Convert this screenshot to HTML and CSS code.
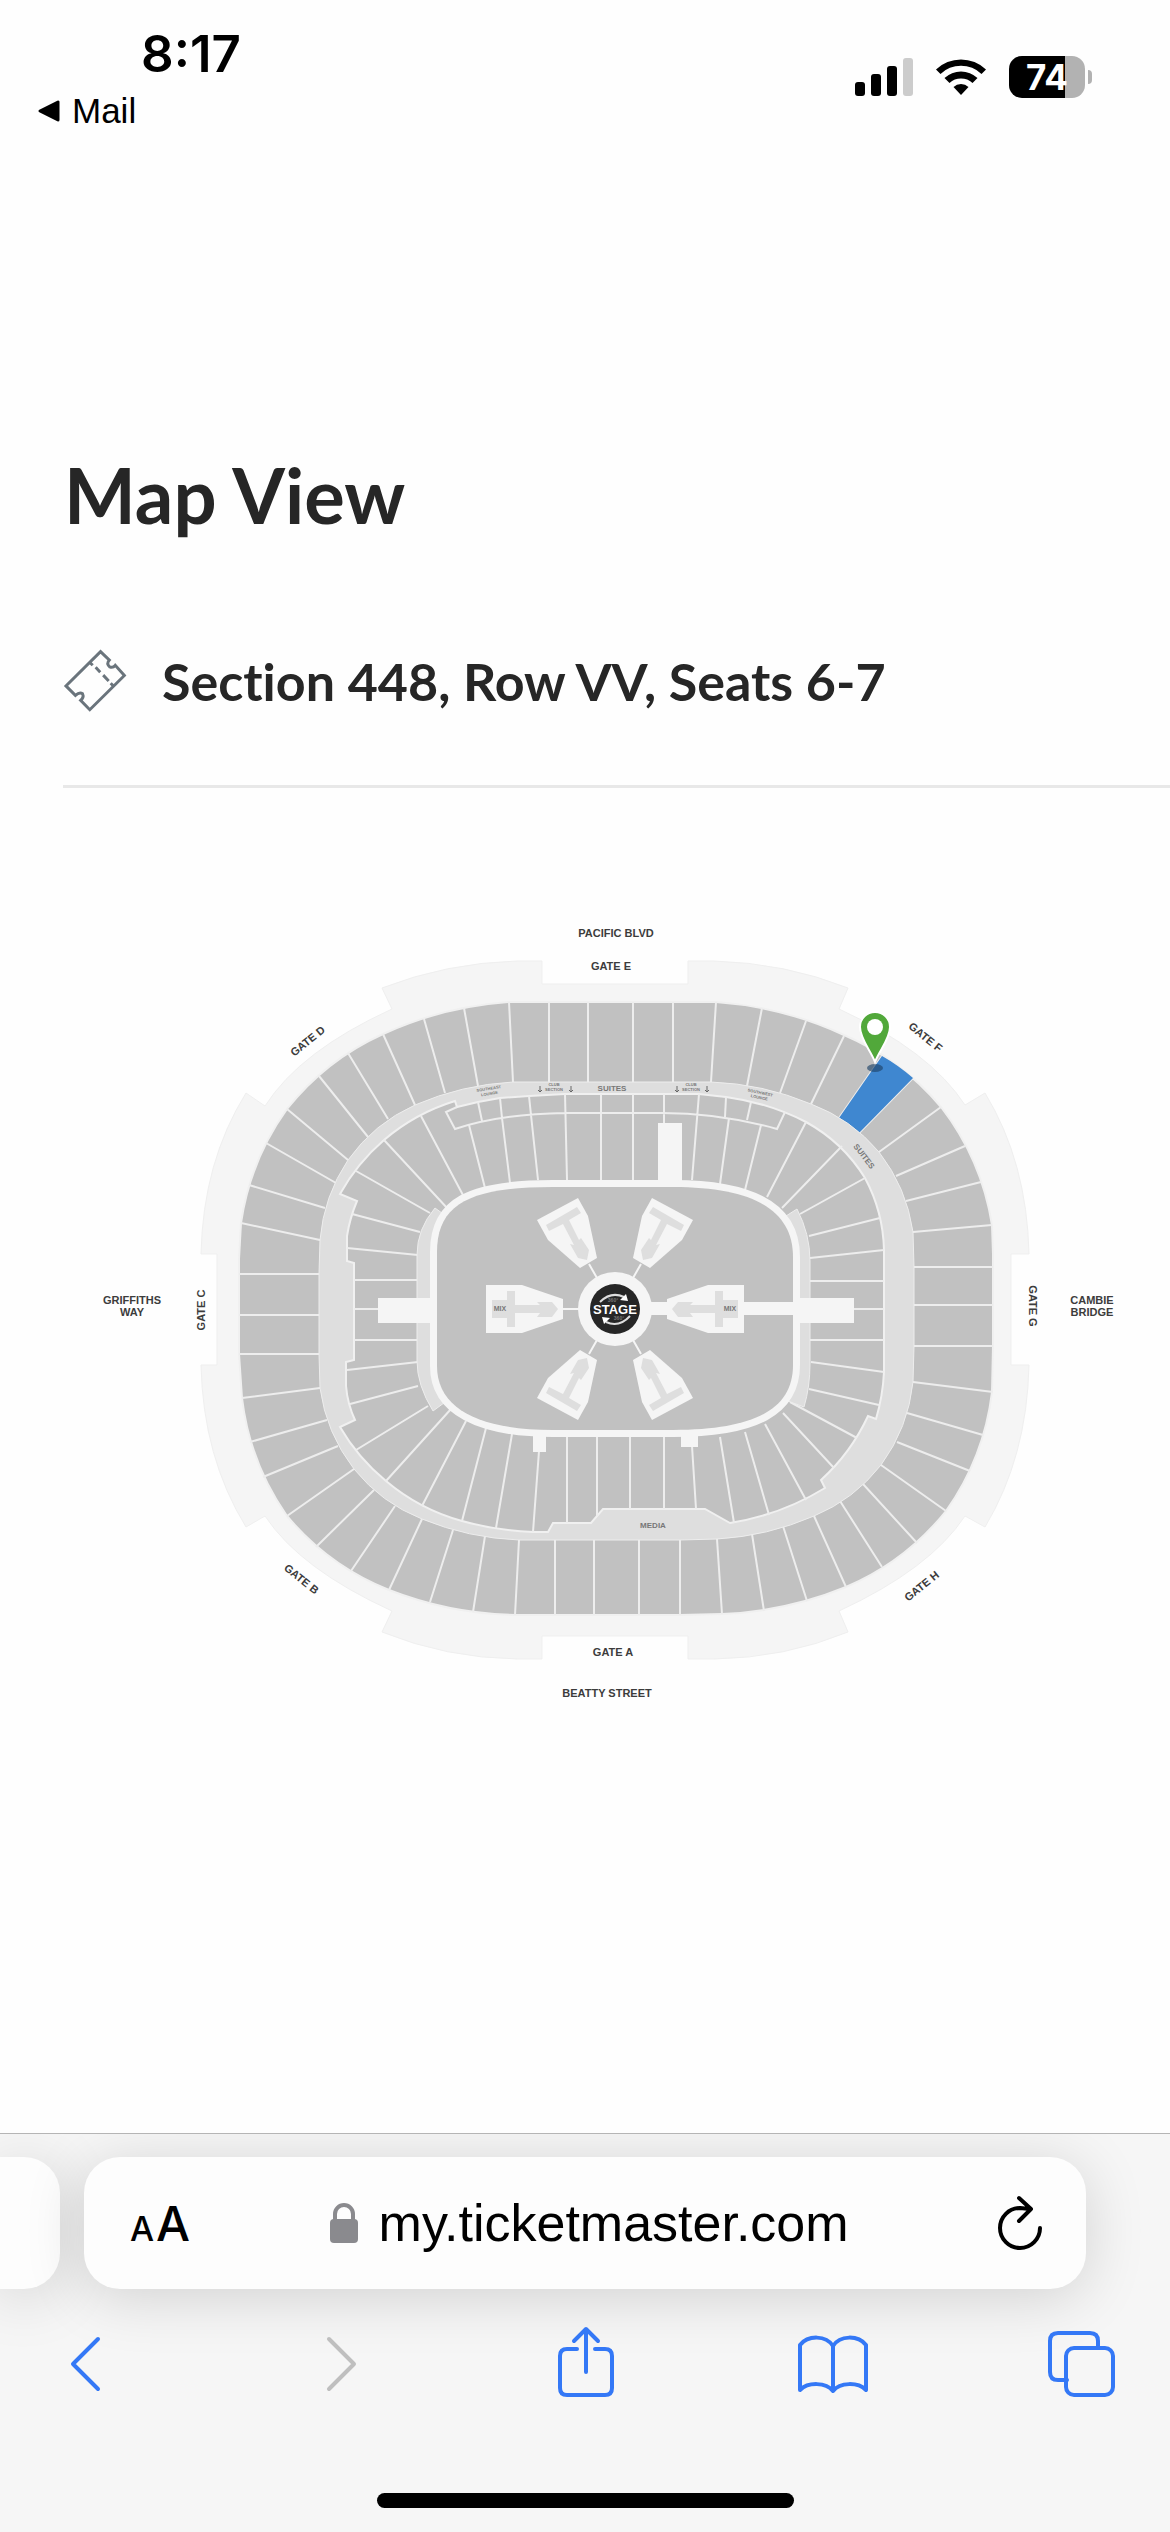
FILE: index.html
```
<!DOCTYPE html>
<html lang="en">
<head>
    <meta charset="UTF-8">
    <meta name="viewport" content="width=device-width, initial-scale=1.0">
    <title>Map View</title>
    <link rel="stylesheet" href="styles.css">
</head>
<body>
    <header class="status-bar">
        <div class="status-left">
            <time class="clock">8:17</time>
            <a class="back-link" href="#">
                <svg width="22" height="22" viewBox="0 0 22 22" aria-hidden="true"><path d="M20 2v18L2 11z" fill="#000" stroke="#000" stroke-width="3" stroke-linejoin="round"/></svg>
                Mail
            </a>
        </div>
        <div class="status-right">
            <svg width="58" height="38" viewBox="0 0 58 38" aria-label="Signal">
                <rect x="0" y="24" width="10" height="14" rx="3"/>
                <rect x="16" y="16" width="10" height="22" rx="3"/>
                <rect x="32" y="8" width="10" height="30" rx="3"/>
                <rect x="48" y="0" width="10" height="38" rx="3" fill="#ccc"/>
            </svg>
            <svg width="52" height="38" viewBox="0 0 52 38" aria-label="Wi-Fi">
                <path d="M1 11.500A36 36 0 0 1 51 11.500L46.500 16A29.500 29.500 0 0 0 5.500 16z"/>
                <path d="M9.500 20A24 24 0 0 1 42.500 20L37.500 25A17 17 0 0 0 14.500 25z"/>
                <path d="M18.500 29A11 11 0 0 1 33.500 29L26 37z"/>
            </svg>
            <div class="battery"><span class="battery-level">74</span></div>
        </div>
    </header>

    <main>
        <h1>Map View</h1>
        <div class="seat-info">
            <svg class="ticket-icon" viewBox="66 58 196 196" aria-hidden="true">
                <path d="M181 66L208 92Q198 103 209 113Q219 117 226 108L254 139L148 244L120 215Q131 206 126 195Q117 188 104 200L75 171z"/>
                <path d="M149 100l8 8M166 114l14 15M189 138l17 18M212 163l8 8"/>
            </svg>
            <h2>Section 448, Row VV, Seats 6-7</h2>
        </div>

        <svg class="venue-map" viewBox="0 900 1170 820" role="img" aria-label="Seating map">
            <!-- concourse -->
            <path class="concourse" d="M542 962H517Q446 964 382 989L392 1010Q300 1052 265 1107L246 1094Q203 1163 201 1255H217V1366H201Q203 1458 246 1528L265 1517Q300 1570 392 1612L382 1633Q446 1659 517 1660H542V1637H688V1660H714Q785 1659 848 1633L839 1612Q930 1570 965 1517L985 1528Q1027 1458 1029 1366H1011V1255H1029Q1027 1163 985 1094L965 1106Q930 1052 839 1010L848 989Q785 964 714 962H688V985H542z"/>

            <!-- upper bowl -->
            <path class="seats" d="M508 1003A365 365 0 0 0 383 1035A258 258 0 0 0 287 1110A260 260 0 0 0 241 1224L239 1260V1355L242 1399A260 260 0 0 0 287 1517A258 258 0 0 0 389 1591A365 365 0 0 0 515 1616H680L722 1615A365 365 0 0 0 846 1588A258 258 0 0 0 946 1512A260 260 0 0 0 992 1393L993 1347V1255L992 1226A260 260 0 0 0 941 1108A258 258 0 0 0 844 1036A365 365 0 0 0 716 1003z"/>
            <path class="aisle" d="M509 1003L513 1083M464 1009L478 1087M424 1020L445 1094M383 1035L415 1106M348 1054L388 1120M319 1077L368 1138M287 1110L348 1161M266 1144L336 1184M249 1186L325 1209M241 1224L320 1241M239 1275H319M239 1316H319M239 1355H319M242 1399L320 1389M250 1443L327 1421M263 1478L338 1447M287 1517L354 1470M316 1548L374 1491M351 1572L395 1507M389 1591L422 1520M430 1603L453 1531M473 1613L485 1537M515 1616L519 1541M555 1616V1541M594 1616V1541M639 1616V1541M680 1616V1541M722 1615L717 1540M764 1612L752 1535M807 1602L783 1527M846 1588L814 1517M882 1568L840 1502M917 1544L863 1485M946 1512L881 1466M970 1472L897 1443M983 1436L907 1414M993 1393L913 1383M993 1347H914M993 1306H914M993 1268H914M992 1226L913 1233M981 1183L906 1202M965 1147L896 1177M941 1108L879 1153M913 1079L859 1134M882 1057L839 1119M844 1037L811 1105M806 1022L780 1094M762 1009L747 1087M716 1003L711 1083M673 1003V1083M633 1003V1083M588 1003V1083M549 1003V1083"/>
            <path class="picked" d="M882 1057Q898 1066 913 1079L859 1134Q850 1126 839 1119z"/>

            <!-- suites ring -->
            <path class="ring" d="M549 1083H513A285 285 0 0 0 415 1106A165 165 0 0 0 348 1161A170 170 0 0 0 320 1241L319 1275V1355L320 1389A170 170 0 0 0 354 1470A165 165 0 0 0 422 1520A285 285 0 0 0 519 1541H680L717 1540A285 285 0 0 0 814 1517A165 165 0 0 0 881 1466A170 170 0 0 0 913 1383L914 1347V1268L913 1233A170 170 0 0 0 879 1153A165 165 0 0 0 811 1105A285 285 0 0 0 711 1083z"/>

            <!-- lower bowl -->
            <path class="seats" d="M600 1095H565L529 1097L500 1099L478 1103L457 1108L455 1102A200 200 0 0 0 384 1141A200 200 0 0 0 340 1195L357 1202A150 150 0 0 0 347 1237V1262L354 1264V1361L346 1363V1387A100 100 0 0 0 355 1421L340 1428A200 200 0 0 0 386 1482A200 200 0 0 0 462 1522A300 300 0 0 0 533 1533H548L553 1524H591L603 1510H705L730 1524A260 260 0 0 0 825 1489L821 1481A200 200 0 0 0 868 1417L876 1420A200 200 0 0 0 884 1373V1251A160 160 0 0 0 865 1179A160 160 0 0 0 806 1123A250 250 0 0 0 726 1098L699 1095z"/>
            <path class="aisle" d="M457 1108L446 1113L455 1130Q500 1115 565 1114H662Q720 1114 777 1130L785 1113M478 1103L482 1122M500 1099L502 1119L510 1184M529 1097L531 1116L538 1181M565 1095L567 1181M601 1095V1181M633 1095V1181M664 1095V1124M699 1095L692 1181M726 1098L725 1118M729 1119L720 1185M751 1103L747 1121M761 1126L745 1191M806 1123L767 1198M842 1147L782 1209M865 1179L800 1215M880 1219L809 1237M884 1251L810 1259M884 1282H810M884 1310H854M884 1341H810M884 1373L811 1363M879 1406L809 1390M857 1439L790 1403M834 1469L783 1414M806 1501L765 1425M769 1516L745 1433M734 1524L720 1438M696 1510L692 1447M664 1510V1437M630 1510V1437M597 1517V1437M567 1524V1437M533 1533L539 1452M496 1529L512 1435M462 1522L486 1429M422 1507L466 1422M386 1482L451 1410M356 1451L428 1407M350 1405L418 1387M347 1371L418 1363M354 1341H418M354 1310H378M354 1281H418M347 1249L418 1256M352 1215L420 1233M356 1172L430 1214M384 1141L448 1210M421 1117L464 1198M469 1126L485 1189"/>

            <!-- side strips and entries -->
            <path class="ring" d="M435 1209Q417 1230 417 1256V1362Q417 1386 433 1412L448 1401L436 1370V1250L446 1217z"/>
            <path class="ring" d="M797 1210Q810 1235 810 1262V1364Q810 1388 804 1408L788 1402L796 1370V1250L786 1217z"/>
            <path class="wall" d="M378 1299h56v25h-56zM796 1299h58v25h-58zM658 1124h24v62h-24zM533 1434h13v19h-13zM681 1434h17v14h-17z"/>

            <!-- floor -->
            <path class="floor" d="M437 1253C437 1205 470 1188 553 1188H673C755 1188 793 1212 793 1258V1366C793 1410 755 1431 673 1431H553C480 1431 437 1410 437 1367z"/>
            <path class="wall" d="M640 1303h156v13h-156z"/>
            <path class="walkway" d="M562 1310h20M589 1265l8 14M641 1265l-8 14M589 1355l8-14M641 1355l-8-14"/>
            <circle class="wall" cx="615" cy="1310" r="37"/>

            <defs>
                <g id="pod">
                    <path class="wall" d="M578 1199L588 1217L597 1259L580 1269L548 1241L537 1221z"/>
                    <path class="rig" d="M546 1226L577 1208L581 1214L569 1221L579 1241L581 1239L589 1251L587 1261L578 1259L570 1245L574 1246L563 1225L549 1232z"/>
                </g>
                <g id="mix-pod">
                    <path class="wall" d="M486 1286h36l41 14v20l-41 14h-36z"/>
                    <path class="rig" d="M492 1301h15v-9h8v14h25l-3-3h15l6 7l-6 8h-15l3-4h-25v14h-8v-9h-15z"/>
                </g>
            </defs>
            <use href="#pod"/>
            <use href="#pod" transform="matrix(-1 0 0 1 1230 0)"/>
            <use href="#pod" transform="matrix(1 0 0 -1 0 2620)"/>
            <use href="#pod" transform="matrix(-1 0 0 -1 1230 2620)"/>
            <use href="#mix-pod"/>
            <use href="#mix-pod" transform="matrix(-1 0 0 1 1230 0)"/>
            <text class="note" x="500" y="1312">MIX</text>
            <text class="note" x="730" y="1312">MIX</text>

            <circle cx="615" cy="1310" r="25" fill="#262626"/>
            <path class="spin" d="M600 1303Q611 1292 624 1298"/>
            <path class="spin" d="M630 1317Q619 1329 606 1323"/>
            <path d="M628 1302l-8-1l6-6zM602 1318l8 1l-6 6z" fill="#fff"/>
            <text class="degrees" x="613" y="1303">360°</text>
            <text class="degrees" x="619" y="1321">360°</text>
            <text class="stage" x="615" y="1315">STAGE</text>

            <!-- labels -->
            <text class="gate" x="616" y="938">PACIFIC BLVD</text>
            <text class="gate" x="611" y="971">GATE E</text>
            <text class="gate" x="613" y="1657">GATE A</text>
            <text class="gate" x="607" y="1698">BEATTY STREET</text>
            <text class="gate" x="132" y="1305">GRIFFITHS</text>
            <text class="gate" x="132" y="1317">WAY</text>
            <text class="gate" x="1092" y="1305">CAMBIE</text>
            <text class="gate" x="1092" y="1317">BRIDGE</text>
            <text class="gate" transform="translate(205 1311) rotate(-90)">GATE C</text>
            <text class="gate" transform="translate(1029 1307) rotate(90)">GATE G</text>
            <text class="gate" transform="translate(310 1045) rotate(-39)">GATE D</text>
            <text class="gate" transform="translate(923 1041) rotate(39)">GATE F</text>
            <text class="gate" transform="translate(299 1583) rotate(39)">GATE B</text>
            <text class="gate" transform="translate(924 1590) rotate(-39)">GATE H</text>
            <text class="suite" x="612" y="1092">SUITES</text>
            <text class="suite" transform="translate(862 1159) rotate(52)">SUITES</text>
            <text class="suite" x="653" y="1529">MEDIA</text>
            <text class="tiny" x="554" y="1087">CLUB</text>
            <text class="tiny" x="554" y="1092">SECTION</text>
            <text class="tiny" x="691" y="1087">CLUB</text>
            <text class="tiny" x="691" y="1092">SECTION</text>
            <g transform="translate(489 1091) rotate(-9)"><text class="tiny">SOUTHEAST</text><text class="tiny" y="5">LOUNGE</text></g>
            <g transform="translate(760 1095) rotate(12)"><text class="tiny">SOUTHWEST</text><text class="tiny" y="5">LOUNGE</text></g>
            <path class="arrows" d="M540 1087v6m-2-2l2 2l2-2M571 1087v6m-2-2l2 2l2-2M677 1087v6m-2-2l2 2l2-2M707 1087v6m-2-2l2 2l2-2"/>

            <!-- seat pin -->
            <ellipse cx="875" cy="1069" rx="8" ry="4" fill="#1f4468" opacity=".65"/>
            <path class="pin" d="M875 1063C871 1052 860 1040 860 1028A15 15 0 0 1 890 1028C890 1040 879 1052 875 1063z"/>
            <circle cx="875" cy="1028" r="8" fill="#fff"/>
        </svg>
    </main>

    <footer class="browser-bar">
        <div class="tab-strip">
            <div class="prev-tab"></div>
            <div class="address-bar">
                <button class="text-size" aria-label="Page settings"><span class="small-a">A</span><span>A</span></button>
                <label class="address">
                    <svg width="28" height="40" viewBox="0 0 28 40" aria-label="Secure">
                        <rect x="0" y="16" width="28" height="24" rx="4" fill="#8a8a8e"/>
                        <path d="M5 17v-6a9 9 0 0 1 18 0v6" fill="none" stroke="#8a8a8e" stroke-width="4"/>
                    </svg>
                    <input type="text" value="my.ticketmaster.com" aria-label="Address">
                </label>
                <button aria-label="Reload">
                    <svg width="48" height="60" viewBox="0 0 48 60"><path d="M44 35A20 20 0 1 1 24 15L34 16M23 5l12 11l-12 12" fill="none" stroke="#000" stroke-width="4" stroke-linecap="round" stroke-linejoin="round"/></svg>
                </button>
            </div>
        </div>
        <nav class="toolbar">
            <button aria-label="Back"><svg viewBox="0 0 72 72"><path d="M47 11L22 36L47 61"/></svg></button>
            <button aria-label="Forward" disabled><svg viewBox="0 0 72 72"><path d="M29 11L54 36L29 61"/></svg></button>
            <button aria-label="Share"><svg viewBox="0 0 72 72"><path d="M28 21H18Q11 21 11 28V60Q11 67 18 67H56Q63 67 63 60V28Q63 21 56 21H46M37 44V2M25 13L37 1L49 13"/></svg></button>
            <button aria-label="Bookmarks"><svg viewBox="0 0 72 72"><path d="M36 18C29 7 11 7 3 17V62C11 54 29 54 36 63C43 54 61 54 69 62V17C61 7 43 7 36 18V63"/></svg></button>
            <button aria-label="Tabs"><svg viewBox="0 0 72 72"><path d="M21 52H12Q4 52 4 44V13Q4 5 12 5H44Q52 5 52 13V19"/><rect x="20" y="20" width="47" height="47" rx="8"/></svg></button>
        </nav>
        <div class="home-indicator"></div>
    </footer>
</body>
</html>
```

FILE: styles.css
```
* {
    box-sizing: border-box;
}
body {
    font-family: "Liberation Sans", Arial, sans-serif;
    background-color: #fefefe;
    color: #262626;
    display: flex;
    flex-direction: column;
    min-height: 100vh;
    margin: 0;
}
button {
    background: none;
    border: none;
    padding: 0;
    font-family: inherit;
    color: #000;
    cursor: pointer;
}
svg {
    display: block;
    overflow: visible;
}

/* Status bar */
.status-bar {
    display: flex;
    justify-content: space-between;
    padding: 24px 85px 0 38px;
    color: #000;
}
.status-left {
    display: flex;
    flex-direction: column;
    gap: 7px;
}
.clock {
    font-family: Inter, sans-serif;
    font-size: 51px;
    font-weight: 600;
    line-height: 60px;
    padding-left: 103px;
}
.back-link {
    display: flex;
    align-items: center;
    gap: 12px;
    font-size: 35px;
    line-height: 40px;
    color: #000;
    text-decoration: none;
}
.status-right {
    display: flex;
    align-items: center;
    gap: 22px;
    height: 42px;
    margin-top: 32px;
}
.battery {
    position: relative;
    width: 76px;
    height: 42px;
    border-radius: 13px;
    background: linear-gradient(90deg, #000 74%, #b2b2b2 74%);
    color: #fff;
    text-align: center;
}
.battery::after {
    content: "";
    position: absolute;
    right: -7px;
    top: 14px;
    width: 4px;
    height: 14px;
    border-radius: 0 4px 4px 0;
    background-color: #b2b2b2;
}
.battery-level {
    font-family: Inter, sans-serif;
    font-size: 35px;
    font-weight: 700;
    line-height: 42px;
}

/* Page */
h1,
h2 {
    font-family: Lato, sans-serif;
    font-weight: 700;
    font-variant-ligatures: none;
}
h1 {
    font-size: 76px;
    line-height: 88px;
    margin: 320px 64px 0;
}
h2 {
    font-size: 52px;
    line-height: 60px;
    margin: 0;
}
.seat-info {
    display: flex;
    align-items: center;
    gap: 35px;
    margin: 110px 0 0 63px;
    padding-bottom: 72px;
    border-bottom: 3px solid #e8e8e8;
}
.ticket-icon {
    width: 64px;
    height: 64px;
    fill: none;
    stroke: #6a747c;
    stroke-width: 9;
}

/* Venue map */
.venue-map {
    width: 100%;
    margin-top: 111px;
}
.concourse {
    fill: #f5f5f5;
    stroke: #efefef;
}
.seats {
    fill: #c1c1c1;
    stroke: #f0f0f0;
    stroke-width: 2;
}
.aisle {
    fill: none;
    stroke: #ededed;
    stroke-width: 2;
}
.picked {
    fill: #3f87d0;
}
.ring {
    fill: #dedede;
    stroke: #ededed;
}
.wall {
    fill: #f5f5f5;
}
.floor {
    fill: #c1c1c1;
    stroke: #f5f5f5;
    stroke-width: 14;
    paint-order: stroke;
}
.walkway {
    stroke: #f5f5f5;
    stroke-width: 2;
}
.rig {
    fill: #dedede;
}
.spin {
    fill: none;
    stroke: #ddd;
    stroke-width: 2;
}
.arrows {
    fill: none;
    stroke: #666;
}
.pin {
    fill: #51a83a;
    stroke: #fff;
    stroke-width: 2;
}
.venue-map text {
    font-weight: bold;
    text-anchor: middle;
}
.gate {
    font-size: 11px;
    fill: #3c3c3c;
}
.suite {
    font-size: 8px;
    fill: #777;
}
.note {
    font-size: 7px;
    fill: #777;
}
.tiny {
    font-size: 4px;
    fill: #777;
}
.degrees {
    font-size: 5px;
    fill: #777;
}
.stage {
    font-size: 13px;
    fill: #fff;
}

/* Browser bar */
.browser-bar {
    margin-top: auto;
    padding: 23px 0 24px;
    border-top: 1px solid #b5b5b5;
    background-color: #f6f6f6;
    overflow: hidden;
}
.tab-strip {
    display: flex;
    gap: 24px;
    padding-right: 84px;
}
.prev-tab,
.address-bar {
    height: 132px;
    background-color: #fdfdfd;
    box-shadow: 0 8px 60px rgba(0, 0, 0, 0.15);
}
.prev-tab {
    width: 60px;
    border-radius: 0 36px 36px 0;
}
.address-bar {
    flex: 1;
    display: flex;
    justify-content: space-between;
    align-items: center;
    padding: 0 42px 0 46px;
    border-radius: 36px;
}
.text-size {
    display: flex;
    align-items: baseline;
    gap: 2px;
    font-family: Inter, sans-serif;
    font-size: 48px;
    font-weight: 500;
}
.small-a {
    font-size: 34px;
}
.address {
    display: flex;
    align-items: center;
    gap: 21px;
}
.address input {
    width: 478px;
    padding: 0;
    border: none;
    background: none;
    font-family: inherit;
    font-size: 52px;
    color: #000;
}
.toolbar {
    display: flex;
    justify-content: space-between;
    padding: 39px 52px 0 51px;
}
.toolbar button {
    width: 72px;
    height: 72px;
}
.toolbar svg {
    fill: none;
    stroke: #3478f6;
    stroke-width: 4;
    stroke-linecap: round;
    stroke-linejoin: round;
}
.toolbar button:disabled svg {
    stroke: #bfbfbf;
}
.home-indicator {
    width: 417px;
    height: 15px;
    margin: 93px auto 0;
    border-radius: 8px;
    background-color: #000;
}
```
